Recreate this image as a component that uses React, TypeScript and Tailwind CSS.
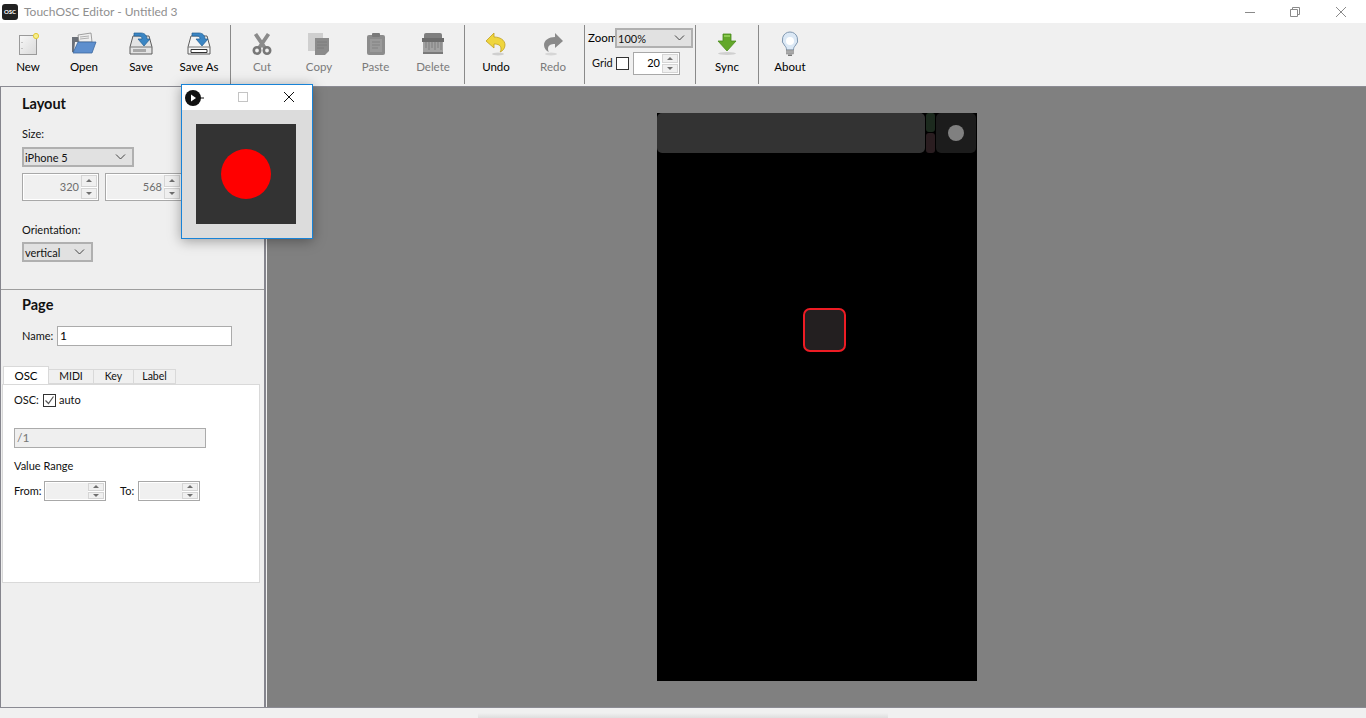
import React from "react";

const Sep = () => <div className="w-px h-[59px] bg-[#8a8a8a] mt-[2px] shrink-0" />;

function Tool({ label, w, disabled, children }: { label: string; w: number; disabled?: boolean; children: React.ReactNode }) {
  return (
    <div className="flex flex-col items-center shrink-0" style={{ width: w }}>
      <div className="h-[26px] mt-[8px] w-[26px] flex items-center justify-center">{children}</div>
      <div className={"text-[11.5px] leading-[14px] mt-[3px] whitespace-nowrap " + (disabled ? "text-[#7a7a7a]" : "text-black")}>{label}</div>
    </div>
  );
}

const NewIcon = () => (
  <svg width="24" height="24" viewBox="0 0 24 24">
    <defs><linearGradient id="ng" x1="0" y1="0" x2="1" y2="1"><stop offset="0" stopColor="#f8f8f8" /><stop offset="1" stopColor="#d9d9d9" /></linearGradient></defs>
    <rect x="3.500" y="3.500" width="17" height="19" fill="url(#ng)" stroke="#9a9a9a" />
    <path d="M5.500 10.500h1M5.500 16.500h1" stroke="#9a9a9a" />
    <circle cx="20" cy="4" r="2.600" fill="#f6ef8a" stroke="#e3c93a" />
  </svg>
);
const OpenIcon = () => (
  <svg width="26" height="24" viewBox="0 0 26 24">
    <path d="M1 5h6l1-1h4v6H4l-1 10H1z" fill="#6b7078" />
    <path d="M7 3l13-2 1 9H8z" fill="#f0f0f0" stroke="#8a8a8a" strokeWidth=".8" />
    <path d="M9 5l9-1M9 7l9-1" stroke="#b0b0b0" />
    <path d="M7 10h18l-4 11H2z" fill="#5e8fce" stroke="#3c689f" strokeWidth=".8" />
  </svg>
);
function DiskIcon({ as }: { as?: boolean }) {
  return (
    <svg width="26" height="24" viewBox="0 0 26 24">
      <path d="M5 4h16l3 11v7H2v-7z" fill={as ? "#f4f4f4" : "#e4e4e4"} stroke="#5c5c5c" />
      <path d="M2 15h22" stroke="#777" />
      {as ? <path d="M5 17.500h16v3H5z" fill="#fff" stroke="#333" /> : <rect x="5" y="17" width="13" height="3" fill="#a8a8a8" />}
      <path d="M6 1h7c4 0 6 3 6 6h3l-6 7-6-7h4c0-2-1-3-3-3H6z" fill="#3b86c4" stroke="#235f92" strokeWidth=".7" />
    </svg>
  );
}
const CutIcon = () => (
  <svg width="20" height="24" viewBox="0 0 20 24" fill="none">
    <path d="M3.500 2l9.500 14M16.500 2L7 16" stroke="#8b8b8b" strokeWidth="3.800" />
    <circle cx="5" cy="18.500" r="3.200" stroke="#777" strokeWidth="2.600" />
    <circle cx="15" cy="18.500" r="3.200" stroke="#777" strokeWidth="2.600" />
  </svg>
);
const CopyIcon = () => (
  <svg width="24" height="24" viewBox="0 0 24 24">
    <rect x="1" y="1" width="15" height="18" fill="#cfcfcf" />
    <path d="M8 6h14v13l-4 4H8z" fill="#8b8b8b" />
    <path d="M10 10h10M10 13h10M10 16h7" stroke="#7d7d7d" />
  </svg>
);
const PasteIcon = () => (
  <svg width="20" height="24" viewBox="0 0 20 24">
    <rect x="1" y="3" width="18" height="20" rx="2" fill="#8c8c8c" />
    <rect x="6" y="1" width="8" height="4" rx="1" fill="#7a7a7a" />
    <rect x="4" y="7" width="12" height="13" fill="#9a9a9a" />
    <path d="M6 10h8M6 13h8M6 16h6" stroke="#828282" />
  </svg>
);
const DeleteIcon = () => (
  <svg width="24" height="24" viewBox="0 0 24 24">
    <rect x="3" y="1" width="18" height="7" rx="2" fill="#7f7f7f" />
    <rect x="1" y="6" width="22" height="4" fill="#6c6c6c" />
    <rect x="2" y="10" width="20" height="12" fill="#a2a2a2" />
    <path d="M5 10v6M8 10v8M11 10v6M14 10v8M17 10v6M20 10v8" stroke="#7f7f7f" />
    <rect x="2" y="20" width="20" height="2" fill="#7a7a7a" />
  </svg>
);
const UndoIcon = () => (
  <svg width="22" height="24" viewBox="0 0 22 24">
    <ellipse cx="13" cy="22" rx="6" ry="1.500" fill="#cfcfcf" />
    <path d="M9 1L1 9l8 7v-4c4 0 7 1 7 5 0 2-1 3-1 3 3-1 5-4 5-7 0-5-5-8-11-8z" fill="#efd53d" stroke="#c0a020" strokeWidth=".8" />
  </svg>
);
const RedoIcon = () => (
  <svg width="22" height="24" viewBox="0 0 22 24">
    <ellipse cx="9" cy="22" rx="6" ry="1.500" fill="#d6d6d6" />
    <path d="M13 1l8 8-8 7v-4c-4 0-7 1-7 5 0 2 1 3 1 3-3-1-5-4-5-7 0-5 5-8 11-8z" fill="#8a8a8a" />
  </svg>
);
const SyncIcon = () => (
  <svg width="22" height="24" viewBox="0 0 22 24">
    <ellipse cx="11" cy="21.500" rx="9" ry="1.500" fill="#d0d0d0" />
    <path d="M7 2h8v7h5L11 19 2 9h5z" fill="#63a82a" stroke="#4a8a1c" strokeWidth=".8" />
    <path d="M8 3h6v2H8z" fill="#8ccb52" />
  </svg>
);
const AboutIcon = () => (
  <svg width="20" height="26" viewBox="0 0 20 26">
    <path d="M10 1a8 8 0 0 0-5 14c1 1 1.500 2 1.500 4h7c0-2 .5-3 1.500-4A8 8 0 0 0 10 1z" fill="#dbe8f5" stroke="#7f97b0" />
    <circle cx="10" cy="10" r="4" fill="#fff" />
    <rect x="6.500" y="19" width="7" height="4" fill="#a8a8a8" stroke="#808080" strokeWidth=".5" />
    <path d="M8 23.500h4v1.500H8z" fill="#777" />
  </svg>
);

const Chevron = () => (
  <svg width="11" height="6" viewBox="0 0 11 6" fill="none"><path d="M1 .5l4.500 4.500L10 .5" stroke="#444" /></svg>
);

function Select({ text, w, h = 20, className = "" }: { text: string; w: number; h?: number; className?: string }) {
  return (
    <div className={"flex items-center justify-between border-2 border-[#b0b0b0] bg-[#e1e1e1] pl-[1px] pr-[6px] text-[11px] text-[#111] " + className} style={{ width: w, height: h }}>
      <span className="leading-none">{text}</span>
      <Chevron />
    </div>
  );
}

function Spin({ value, w, h = 28, disabled, bg = "bg-[#f0f0f0]" }: { value: string; w: number; h?: number; disabled?: boolean; bg?: string }) {
  return (
    <div className="flex border border-[#a8a8a8] bg-white p-[1px] shrink-0" style={{ width: w, height: h }}>
      <div className={"flex-1 flex items-center justify-end pr-[2px] text-[11px] " + bg + (disabled ? " text-[#6d6d6d]" : " text-black")}>{value}</div>
      <div className="w-[16px] flex flex-col gap-[1px]">
        <div className="flex-1 border border-[#d5d5d5] bg-[#f0f0f0] flex items-center justify-center">
          <div className="w-0 h-0 border-x-[3px] border-x-transparent border-b-[3px] border-b-[#707070]" />
        </div>
        <div className="flex-1 border border-[#d5d5d5] bg-[#f0f0f0] flex items-center justify-center">
          <div className="w-0 h-0 border-x-[3px] border-x-transparent border-t-[3px] border-t-[#707070]" />
        </div>
      </div>
    </div>
  );
}

const Tab = ({ label, w, active }: { label: string; w: number; active?: boolean }) =>
  active ? (
    <div className="h-[18px] bg-white border border-[#d9d9d9] border-b-0 text-[11.5px] flex items-center justify-center relative z-10 -mb-px text-black" style={{ width: w }}>{label}</div>
  ) : (
    <div className="h-[15px] mt-[3px] bg-[#f0f0f0] border border-[#d9d9d9] border-l-0 text-[10.5px] flex items-center justify-center text-[#111]" style={{ width: w }}>{label}</div>
  );

export default function App() {
  return (
    <div className="w-[1366px] h-[718px] overflow-hidden relative flex flex-col bg-[#f0f0f0] font-['Lato','Liberation_Sans',sans-serif]">
      {/* Title bar */}
      <div className="h-[23px] bg-white flex items-center shrink-0 relative">
        <div className="ml-[2px] w-[16px] h-[16px] rounded-[3px] bg-[#222] text-white text-[6px] font-bold flex items-center justify-center leading-none">OSC</div>
        <div className="ml-[6px] text-[12px] text-[#8f8f8f]">TouchOSC Editor - Untitled 3</div>
        <div className="flex-1" />
        <svg width="12" height="12" viewBox="0 0 12 12" className="mr-[33px]"><path d="M1 6.500h10" stroke="#8a8a8a" /></svg>
        <svg width="12" height="12" viewBox="0 0 12 12" fill="none" className="mr-[34px]"><path d="M1.500 3.500h7v7h-7zM3.500 3.500v-2h7v7h-2" stroke="#8a8a8a" /></svg>
        <svg width="12" height="12" viewBox="0 0 12 12" className="mr-[19px]"><path d="M1 1l10 10M11 1L1 11" stroke="#8a8a8a" /></svg>
      </div>

      {/* Toolbar */}
      <div className="h-[63px] bg-[#f0f0f0] flex shrink-0">
        <div className="w-[2px]" />
        <Tool label="New" w={52}><NewIcon /></Tool>
        <Tool label="Open" w={60}><OpenIcon /></Tool>
        <Tool label="Save" w={54}><DiskIcon /></Tool>
        <Tool label="Save As" w={62}><DiskIcon as /></Tool>
        <Sep />
        <Tool label="Cut" w={62} disabled><CutIcon /></Tool>
        <Tool label="Copy" w={52} disabled><CopyIcon /></Tool>
        <Tool label="Paste" w={61} disabled><PasteIcon /></Tool>
        <Tool label="Delete" w={54} disabled><DeleteIcon /></Tool>
        <div className="w-[4px]" />
        <Sep />
        <Tool label="Undo" w={62}><UndoIcon /></Tool>
        <Tool label="Redo" w={52} disabled><RedoIcon /></Tool>
        <div className="w-[5px]" />
        <Sep />
        <div className="w-[110px] shrink-0 flex flex-col pt-[5px]">
          <div className="flex items-center h-[20px] pl-[3px]">
            <span className="text-[11.5px] w-[27px] text-black">Zoom</span>
            <Select text="100%" w={78} h={20} />
          </div>
          <div className="flex items-center mt-[4px] pl-[7px]">
            <span className="text-[11px] w-[24px] text-[#111]">Grid</span>
            <div className="w-[13px] h-[13px] border border-[#333] bg-white" />
            <div className="w-[4px]" />
            <Spin value="20" w={47} h={23} bg="bg-white" />
          </div>
        </div>
        <Sep />
        <Tool label="Sync" w={62}><SyncIcon /></Tool>
        <Sep />
        <Tool label="About" w={62}><AboutIcon /></Tool>
      </div>

      {/* Main */}
      <div className="flex-1 flex min-h-0 border-y border-[#8b8b93]">
        {/* Side panel */}
        <div className="w-[266px] shrink-0 bg-[#efefef] border-l border-r-2 border-[#85858d] flex flex-col">
          <div className="h-[203px] border-b border-[#9d9d9d] shrink-0 pl-[21px] flex flex-col">
            <div className="text-[14.5px] font-bold leading-[14px] mt-[10px] text-[#111]">Layout</div>
            <div className="text-[11px] leading-none mt-[17px] text-[#111]">Size:</div>
            <Select text="iPhone 5" w={112} h={20} className="mt-[8px]" />
            <div className="flex gap-[6px] mt-[6px]">
              <Spin value="320" w={77} disabled />
              <Spin value="568" w={77} disabled />
            </div>
            <div className="text-[11px] leading-none mt-[23px] text-[#111]">Orientation:</div>
            <Select text="vertical" w={71} h={20} className="mt-[7px]" />
          </div>
          <div className="pl-[21px] flex flex-col shrink-0">
            <div className="text-[14.5px] font-bold leading-[14px] mt-[8px] text-[#111]">Page</div>
            <div className="flex items-center mt-[14px] h-[20px]">
              <span className="text-[11px] w-[35px] text-[#111]">Name:</span>
              <div className="w-[175px] h-[20px] border border-[#ababab] bg-white text-[12px] flex items-center pl-[2px]">1</div>
            </div>
          </div>
          <div className="flex pl-[2px] mt-[20px] shrink-0">
            <Tab label="OSC" w={46} active />
            <Tab label="MIDI" w={45} />
            <Tab label="Key" w={40} />
            <Tab label="Label" w={42} />
          </div>
          <div className="ml-[1px] w-[258px] h-[199px] bg-white border border-[#d9d9d9] pl-[11px] shrink-0 flex flex-col">
            <div className="flex items-center mt-[8px] h-[14px] text-[11px] text-[#111]">
              <span className="w-[29px]">OSC:</span>
              <span className="w-[13px] h-[13px] border border-[#333] flex items-center justify-center">
                <svg width="11" height="11" viewBox="0 0 11 11" fill="none"><path d="M1.500 5.500l3 3 5-7" stroke="#555" strokeWidth="1.200" /></svg>
              </span>
              <span className="ml-[3px]">auto</span>
            </div>
            <div className="mt-[21px] w-[192px] h-[20px] border border-[#ababab] bg-[#efefef] text-[12px] text-[#777] flex items-center pl-[2px]">/1</div>
            <div className="text-[11px] leading-none mt-[12px] text-[#111]">Value Range</div>
            <div className="flex items-center mt-[10px] text-[11px] text-[#111]">
              <span className="w-[30px]">From:</span>
              <Spin value="" w={62} h={20} disabled />
              <span className="ml-[14px] w-[18px]">To:</span>
              <Spin value="" w={62} h={20} disabled />
            </div>
          </div>
        </div>
        <div className="w-[1px] bg-[#efefef] shrink-0" />
        {/* Canvas */}
        <div className="flex-1 bg-[#808080] relative">
          <div className="absolute left-[390px] top-[26px] w-[320px] h-[568px] bg-black">
            <div className="flex h-[40px]">
              <div className="w-[268px] h-[40px] rounded-[5px] bg-[#333333]" />
              <div className="ml-[1px] w-[9px] flex flex-col gap-[1px]">
                <div className="h-[19px] rounded-[3px] bg-[#1c2a1e]" />
                <div className="h-[20px] rounded-[3px] bg-[#2a1d20]" />
              </div>
              <div className="ml-[1px] w-[40px] h-[40px] rounded-[5px] bg-[#1c1c1c] flex items-center justify-center">
                <div className="w-[16px] h-[16px] rounded-full bg-[#808080]" />
              </div>
            </div>
            <div className="absolute left-[146px] top-[195px] w-[43px] h-[44px] rounded-[7px] border-2 border-[#ed1c24] bg-[#231f20]" />
          </div>
        </div>
      </div>

      {/* Status */}
      <div className="h-[10px] bg-[#f0f0f0] shrink-0 relative">
        <div className="absolute left-[478px] top-[5px] w-[410px] h-[5px] bg-gradient-to-b from-[#f0f0f0] to-[#dedede]" />
      </div>

      {/* Floating preview window */}
      <div className="absolute left-[181px] top-[84px] w-[132px] h-[155px] border border-[#1883d7] bg-[#dcdcdc] shadow-[0_2px_12px_rgba(0,0,0,0.35)] flex flex-col">
        <div className="h-[25px] bg-white flex items-center relative shrink-0">
          <svg width="20" height="18" viewBox="0 0 20 18" className="ml-[2px]">
            <circle cx="9" cy="9" r="8" fill="#111" />
            <path d="M7 5.500l5 3.500-5 3.500z" fill="#fff" />
            <path d="M16 9h4" stroke="#111" />
          </svg>
          <div className="absolute left-[56px] top-[7px] w-[10px] h-[10px] border border-[#c4c4c4]" />
          <svg width="12" height="12" viewBox="0 0 12 12" className="absolute left-[101px] top-[6px]"><path d="M1 1l10 10M11 1L1 11" stroke="#111" /></svg>
        </div>
        <div className="flex-1 flex items-center justify-center pr-[2px]">
          <div className="w-[100px] h-[100px] bg-[#333333] flex items-center justify-center">
            <div className="w-[50px] h-[50px] rounded-full bg-[#ff0000]" />
          </div>
        </div>
      </div>
    </div>
  );
}
